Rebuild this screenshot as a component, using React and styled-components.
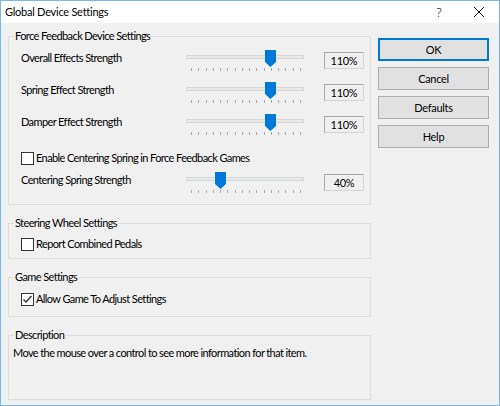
import styled, { createGlobalStyle } from "styled-components";

const GlobalStyle = createGlobalStyle`
  html, body {
    margin: 0;
    padding: 0;
    background: #fff;
  }
  body {
    font-family: Lato, "Noto Sans", sans-serif;
    font-size: 11px;
    letter-spacing: -0.6px;
    color: #000;
  }
`;

const Window = styled.div`
  width: 500px;
  height: 406px;
  box-sizing: border-box;
  border: 1px solid #7ab8e8;
  background: #f0f0f0;
  display: flex;
  flex-direction: column;
`;

const TitleBar = styled.div`
  height: 22px;
  flex: none;
  background: #fff;
  display: flex;
  align-items: center;
  padding-left: 4px;
`;

const Title = styled.span`
  font-size: 11px;
  letter-spacing: -0.25px;
  line-height: 16px;
`;

const CaptionButton = styled.div`
  width: 40px;
  height: 22px;
  display: flex;
  align-items: center;
  justify-content: center;
  color: #111;
  font-family: "Noto Sans", sans-serif;
  font-size: 13px;
  font-weight: 300;
  letter-spacing: 0;
  &:first-of-type {
    margin-left: auto;
  }
`;

const Body = styled.div`
  flex: 1;
  display: flex;
  gap: 7px;
  padding: 5px 9px 0 7px;
`;

const LeftCol = styled.div`
  width: 363px;
  display: flex;
  flex-direction: column;
  gap: 10px;
`;

const Group = styled.fieldset`
  margin: 0;
  padding: 0;
  min-width: 0;
  box-sizing: border-box;
  height: ${p => p.$height}px;
  border: 1px solid #dcdcdc;
`;

const Legend = styled.legend`
  margin-left: 5px;
  padding: 0 1px;
  line-height: 16px;
`;

const GroupContent = styled.div`
  display: flex;
  flex-direction: column;
  padding: ${p => p.$pad};
`;

const SliderRow = styled.div`
  display: grid;
  grid-template-columns: 165px 120px 18px 40px;
  align-items: start;
  height: 22px;
  margin-top: ${p => p.$top || 0}px;
`;

const RowLabel = styled.div`
  line-height: 16px;
`;

const SliderBox = styled.div`
  position: relative;
  width: 120px;
  height: 22px;
  display: flex;
  flex-direction: column;
`;

const Track = styled.div`
  margin-top: 5px;
  width: 118px;
  height: 4px;
  box-sizing: border-box;
  background: #e7eaea;
  border: 1px solid #d6d6d6;
`;

const Ticks = styled.div`
  margin: 9px 0 0 5px;
  width: 110px;
  display: flex;
  justify-content: space-between;
`;

const Tick = styled.span`
  width: 1px;
  height: 3px;
  background: #a8a8a8;
`;

const Thumb = styled.svg`
  position: absolute;
  top: 0;
  left: ${p => p.$left}px;
`;

const ValueBox = styled.div`
  grid-column: 4;
  margin-top: 2px;
  width: 40px;
  height: 17px;
  box-sizing: border-box;
  border: 1px solid;
  border-color: #a9a9a9 #d4d4d4 #d4d4d4 #a9a9a9;
  display: flex;
  align-items: center;
  justify-content: center;
  line-height: 15px;
  letter-spacing: -0.3px;
`;

const CheckRow = styled.label`
  display: flex;
  align-items: center;
  gap: 2px;
  height: 16px;
  line-height: 16px;
  margin-top: ${p => p.$top || 0}px;
`;

const Box = styled.span`
  width: 13px;
  height: 13px;
  box-sizing: border-box;
  border: 1px solid #333;
  background: #fff;
  display: flex;
  align-items: center;
  justify-content: center;
`;

const Desc = styled.div`
  line-height: 16px;
`;

const RightCol = styled.div`
  margin-top: 10px;
  display: flex;
  flex-direction: column;
  gap: 6px;
`;

const Button = styled.div`
  width: 111px;
  height: 23px;
  box-sizing: border-box;
  background: #e1e1e1;
  border: 1px solid ${p => (p.$default ? "#0078d7" : "#adadad")};
  box-shadow: ${p => (p.$default ? "inset 0 0 0 1px #0078d7" : "none")};
  display: flex;
  align-items: center;
  justify-content: center;
  letter-spacing: -0.3px;
`;

const Slider = ({ value }) => {
  const center = 5 + (value / 150) * 109;
  return (
    <SliderBox>
      <Track />
      <Ticks>
        {Array.from({ length: 16 }, (_v, i) => <Tick key={i} />)}
      </Ticks>
      <Thumb width="11" height="17" viewBox="0 0 11 17" $left={Math.round(center - 5.5)}>
        <path d="M0 0 H11 V12 L5.5 17 L0 12 Z" fill="#0078d7" />
      </Thumb>
    </SliderBox>
  );
};

const Checkbox = ({ checked, children, top }) => (
  <CheckRow $top={top}>
    <Box>
      {checked && (
        <svg width="11" height="11" viewBox="0 0 11 11">
          <path d="M1.5 5.5 L4 8 L9.5 2" fill="none" stroke="#333" strokeWidth="1.4" />
        </svg>
      )}
    </Box>
    {children}
  </CheckRow>
);

const sliders = [
  { label: "Overall Effects Strength", value: 110 },
  { label: "Spring Effect Strength", value: 110 },
  { label: "Damper Effect Strength", value: 110 },
];

export default function App() {
  return (
    <>
      <GlobalStyle />
      <Window>
        <TitleBar>
          <Title>Global Device Settings</Title>
          <CaptionButton>?</CaptionButton>
          <CaptionButton>
            <svg width="10" height="10" viewBox="0 0 10 10">
              <path d="M0 0 L10 10 M10 0 L0 10" stroke="#111" strokeWidth="1" />
            </svg>
          </CaptionButton>
        </TitleBar>
        <Body>
          <LeftCol>
            <Group $height={177}>
              <Legend>Force Feedback Device Settings</Legend>
              <GroupContent $pad="6px 0 0 12px">
                {sliders.map((s, i) => (
                  <SliderRow key={s.label} $top={i ? 10 : 0}>
                    <RowLabel>{s.label}</RowLabel>
                    <Slider value={s.value} />
                    <ValueBox>{s.value}%</ValueBox>
                  </SliderRow>
                ))}
                <Checkbox top={14}>Enable Centering Spring in Force Feedback Games</Checkbox>
                <SliderRow $top={6}>
                  <RowLabel>Centering Spring Strength</RowLabel>
                  <Slider value={40} />
                  <ValueBox>40%</ValueBox>
                </SliderRow>
              </GroupContent>
            </Group>
            <Group $height={44}>
              <Legend>Steering Wheel Settings</Legend>
              <GroupContent $pad="5px 0 0 12px">
                <Checkbox>Report Combined Pedals</Checkbox>
              </GroupContent>
            </Group>
            <Group $height={48}>
              <Legend>Game Settings</Legend>
              <GroupContent $pad="6px 0 0 12px">
                <Checkbox checked>Allow Game To Adjust Settings</Checkbox>
              </GroupContent>
            </Group>
            <Group $height={73}>
              <Legend>Description</Legend>
              <GroupContent $pad="2px 0 0 4px">
                <Desc>Move the mouse over a control to see more information for that item.</Desc>
              </GroupContent>
            </Group>
          </LeftCol>
          <RightCol>
            <Button $default>OK</Button>
            <Button>Cancel</Button>
            <Button>Defaults</Button>
            <Button>Help</Button>
          </RightCol>
        </Body>
      </Window>
    </>
  );
}
